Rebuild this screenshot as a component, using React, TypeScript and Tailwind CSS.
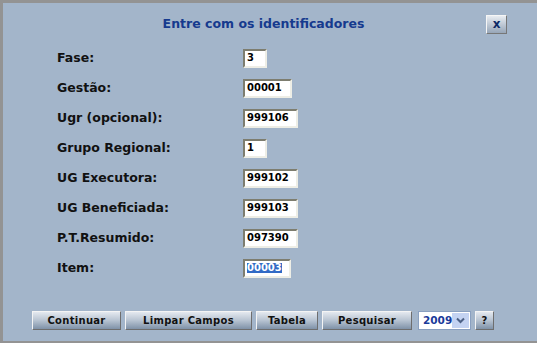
import React from "react";

const font = { fontFamily: '"DejaVu Sans", Verdana, sans-serif' };

const rows: { label: string; value: string; w: string; selected?: boolean }[] = [
  { label: "Fase:", value: "3", w: "w-[24px]" },
  { label: "Gestão:", value: "00001", w: "w-[49px]" },
  { label: "Ugr (opcional):", value: "999106", w: "w-[55px]" },
  { label: "Grupo Regional:", value: "1", w: "w-[24px]" },
  { label: "UG Executora:", value: "999102", w: "w-[55px]" },
  { label: "UG Beneficiada:", value: "999103", w: "w-[55px]" },
  { label: "P.T.Resumido:", value: "097390", w: "w-[55px]" },
  { label: "Item:", value: "00003", w: "w-[48px]", selected: true },
];

function Btn({ children, w }: { children: React.ReactNode; w: string }) {
  return (
    <div
      className={`${w} h-[19px] flex items-center justify-center border border-t-[#f4f4f4] border-l-[#f4f4f4] border-b-[#6e6e6e] border-r-[#6e6e6e] bg-gradient-to-b from-[#e4e9ef] via-[#b7c3d1] to-[#7f92a8] text-[10px] font-bold text-[#111] leading-none tracking-[0.3px]`}
    >
      {children}
    </div>
  );
}

export default function App() {
  return (
    <div
      style={font}
      className="w-[537px] h-[343px] bg-[#a3b5ca] border-t-[3px] border-l-[3px] border-b-[2px] border-[#939393] flex flex-col"
    >
      <div className="grid grid-cols-[1fr_auto_1fr] items-center h-[38px] pt-[5px] pr-[13px]">
        <div />
        <div className="text-[12.5px] font-bold text-[#163a8e]">Entre com os identificadores</div>
        <div className="flex justify-end pr-[17px]">
          <div className="w-[21px] h-[19px] flex items-center justify-center border border-t-[#f6f6f6] border-l-[#f6f6f6] border-b-[#777] border-r-[#777] bg-gradient-to-b from-[#e8ecf1] to-[#97a6b8] text-[12px] font-bold text-[#0c2a66] leading-none pb-[2px]">
            x
          </div>
        </div>
      </div>
      <div className="flex flex-col pl-[54px] pt-[2px]">
        {rows.map((r) => (
          <div key={r.label} className="flex items-center h-[30px]">
            <div className="w-[186px] text-[12.5px] font-bold text-[#111]">{r.label}</div>
            <div
              className={`${r.w} h-[19px] bg-white border-2 border-t-[#7d7d6f] border-l-[#7d7d6f] border-b-[#eeeee6] border-r-[#eeeee6] flex items-center pl-[2px] text-[10px] font-bold text-black leading-none`}
            >
              {r.selected ? (
                <span className="bg-[#316ac5] text-white">{r.value}</span>
              ) : (
                r.value
              )}
            </div>
          </div>
        ))}
      </div>
      <div className="flex-1" />
      <div className="flex items-center pl-[29px] pb-[11px] gap-[4px]">
        <Btn w="w-[89px]">Continuar</Btn>
        <Btn w="w-[127px]">Limpar Campos</Btn>
        <Btn w="w-[62px]">Tabela</Btn>
        <Btn w="w-[90px]">Pesquisar</Btn>
        <div className="w-[53px] h-[19px] ml-[2px] bg-white border border-[#8aa0c0] flex items-center">
          <span className="flex-1 pl-[4px] text-[10.5px] font-bold text-[#1a3a9a] leading-none">2009</span>
          <span className="w-[17px] h-[15px] mr-[1px] bg-[#c4d3f2] flex items-center justify-center">
            <svg width="9" height="7" viewBox="0 0 9 7">
              <path d="M1 1.5 L4.5 5 L8 1.5" stroke="#4d6185" strokeWidth="2" fill="none" />
            </svg>
          </span>
        </div>
        <Btn w="w-[19px]">?</Btn>
      </div>
    </div>
  );
}
